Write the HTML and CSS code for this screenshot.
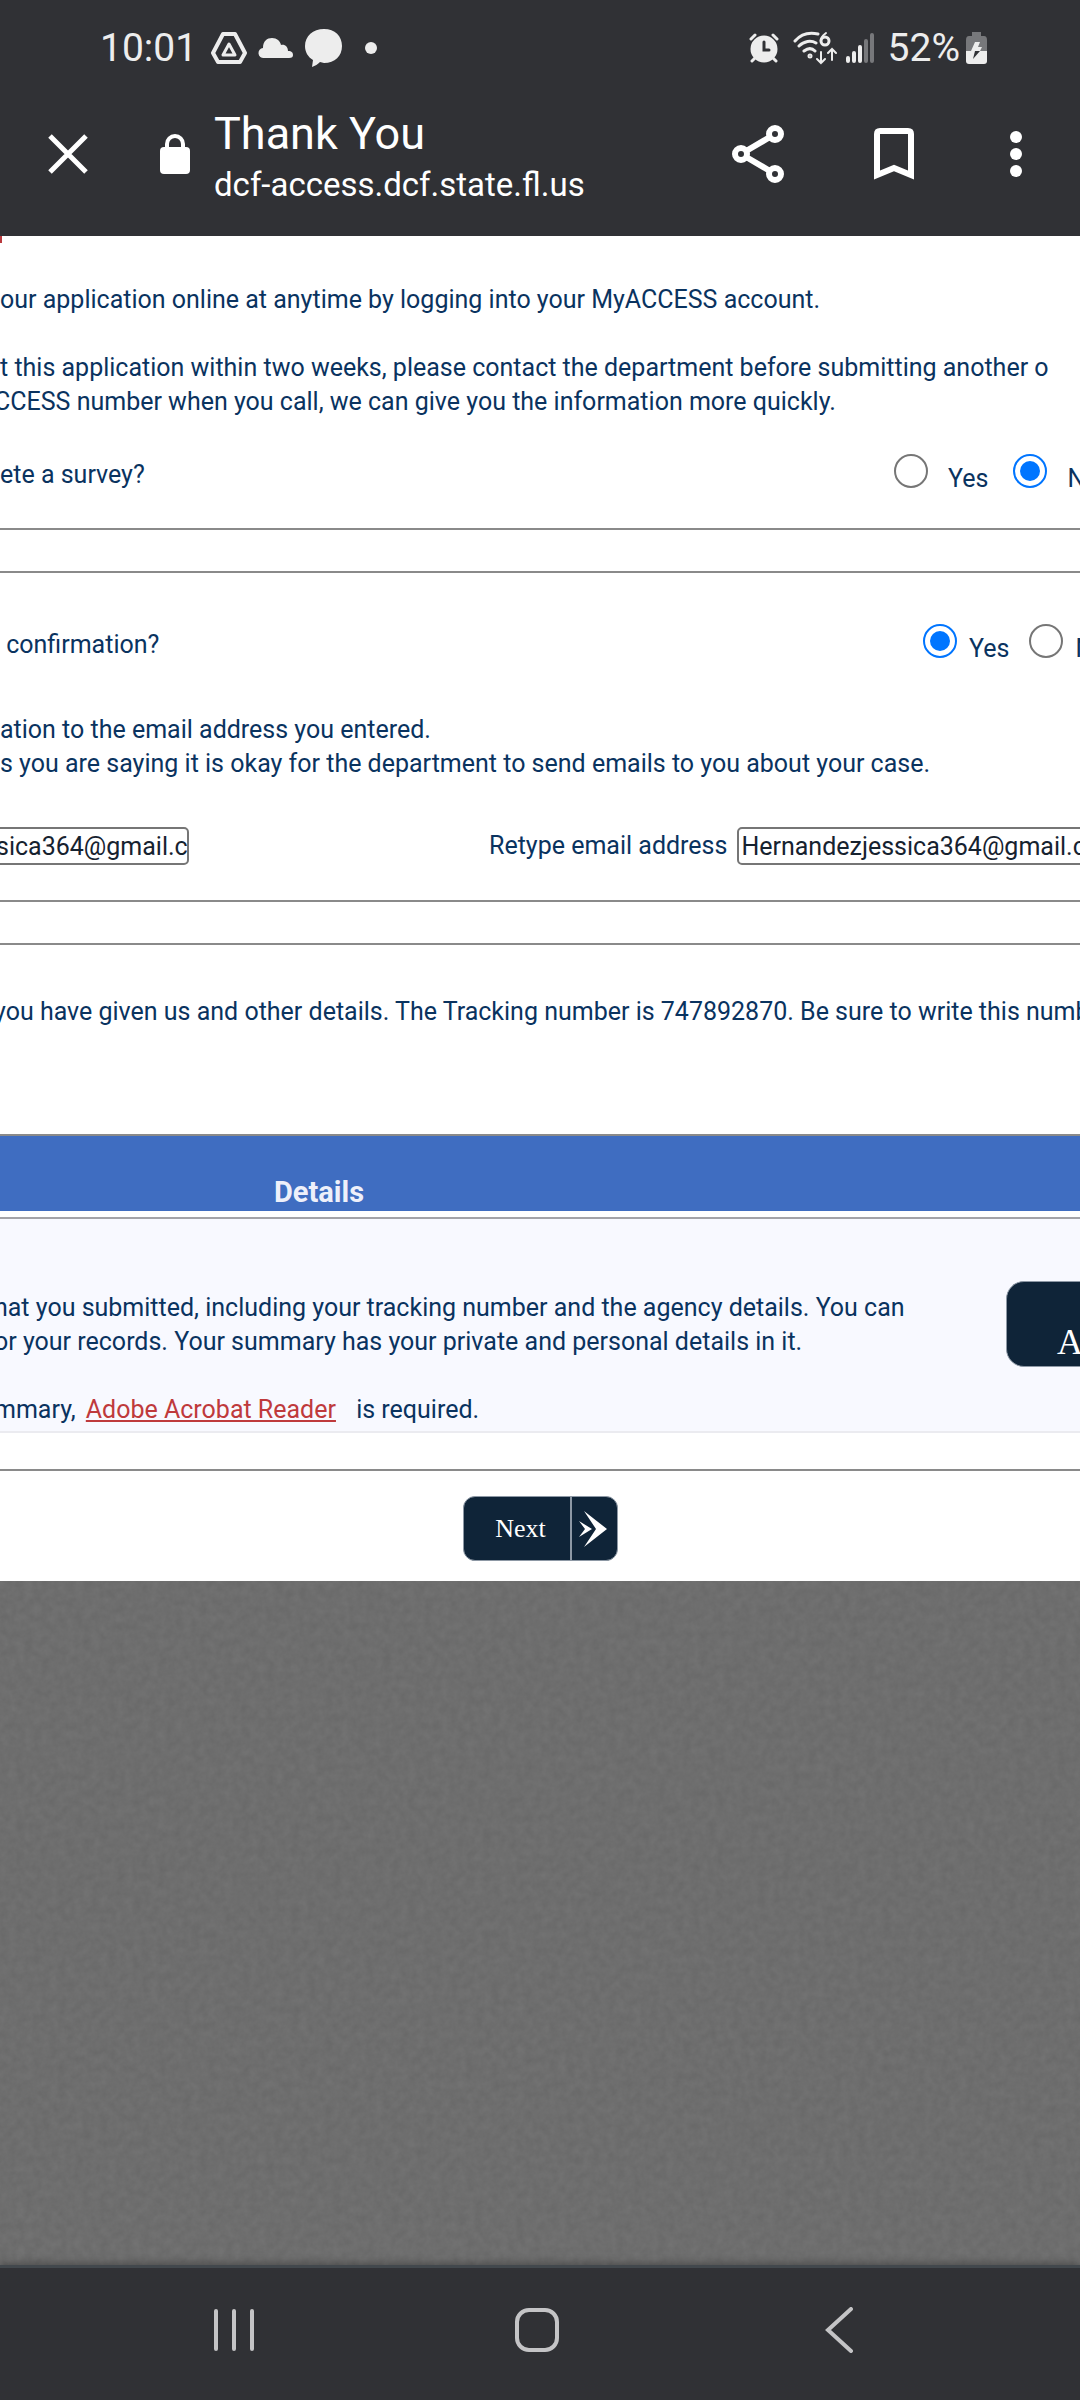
FILE: index.html
```html
<!DOCTYPE html>
<html lang="en">
<head>
    <meta charset="UTF-8">
    <meta name="viewport" content="width=device-width, initial-scale=1.0">
    <title>Thank You</title>
    <link rel="stylesheet" href="styles.css">
</head>
<body>
<!-- Phone status bar -->
<div class="status-bar">
    <span class="status-text">10:01</span>
    <svg class="icon-drive" width="36" height="32" viewBox="0 0 36 32" fill="none" stroke="#ededed" stroke-width="4" stroke-linejoin="round">
        <path d="M12 2h12l10 19-5 9H7l-5-9z"/>
        <path d="M18 12l6 11H12z" stroke-width="3"/>
    </svg>
    <svg class="icon-cloud" width="36" height="22" viewBox="0 0 36 22" fill="#ededed">
        <path d="M6 21a5 5 0 0 1-1-10C5 4 9 1 14 1c5 0 8 3 9 7 4-1 7 2 7 6 4 0 5 2 5 4s-1 3-4 3z"/>
    </svg>
    <svg class="icon-bubble" width="38" height="38" viewBox="0 0 38 38" fill="#ededed">
        <path d="M19 0c11 0 18 7 18 17s-7 17-18 17l-4-1c-2 2-5 4-8 5l1-7C3 28 0 23 0 17 0 7 8 0 19 0z"/>
    </svg>
    <span class="dot"></span>
    <div class="status-right">
        <svg width="30" height="30" viewBox="0 0 30 30" fill="#ededed" stroke="#ededed" stroke-width="3" stroke-linecap="round">
            <circle cx="15" cy="16" r="12"/>
            <path d="M2 6l4-4M28 6l-4-4M6 25l-3 3M24 25l3 3"/>
            <path d="M15 9v8h5" fill="none" stroke="#303135"/>
        </svg>
        <svg class="icon-wifi" width="44" height="34" viewBox="0 0 44 34" fill="none" stroke="#ededed" stroke-width="3" stroke-linecap="round">
            <path d="M2 10C8 3 16 1 25 3M6 15c5-5 12-6 17-3M11 20c4-3 8-3 11 0"/>
            <circle cx="17" cy="25" r="1"/>
            <path d="M33 2c-4 3-6 6-5 9" stroke-width="2"/>
            <circle cx="32" cy="10" r="4"/>
            <path d="M28 21v11m-4-4l4 4 4-4M39 29V18m-4 4l4-4 4 4" stroke-width="2"/>
        </svg>
        <svg class="icon-signal" width="28" height="30" viewBox="0 0 28 30" fill="none" stroke="#ededed" stroke-width="4" stroke-linecap="round">
            <path d="M2 25v3M8 20v8M14 14v14"/>
            <path d="M20 8v20M26 2v26" stroke="#77787b"/>
        </svg>
        <span class="status-text">52%</span>
        <svg class="icon-battery" width="22" height="32" viewBox="0 0 22 32">
            <path d="M6 0h9v4h3q3 0 3 4v11H0V8q0-4 3-4h3z" fill="#77787b"/>
            <path d="M0 19h21v10q0 3-3 3H3q-3 0-3-3z" fill="#ededed"/>
            <path d="M9 10h5l-2 5h4l-2 4H5z" fill="#ededed"/>
            <path d="M9 19h5l-7 8z" fill="#303135"/>
        </svg>
    </div>
</div>

<!-- Browser toolbar -->
<header class="toolbar">
    <button type="button" class="icon-button" aria-label="Close">
        <svg width="40" height="40" viewBox="0 0 40 40" stroke="#fff" stroke-width="5">
            <path d="M2 2l36 36M38 2L2 38"/>
        </svg>
    </button>
    <svg class="lock" width="30" height="40" viewBox="0 0 30 40">
        <path d="M7 16V10a8 8 0 0 1 16 0v6" fill="none" stroke="#fff" stroke-width="4"/>
        <rect y="13" width="30" height="27" rx="4" fill="#fff"/>
    </svg>
    <div class="site">
        <div class="site-title">Thank You</div>
        <div class="site-url">dcf-access.dcf.state.fl.us</div>
    </div>
    <div class="toolbar-actions">
        <button type="button" class="icon-button" aria-label="Share">
            <svg width="52" height="58" viewBox="0 0 52 58" fill="none" stroke="#fff" stroke-width="6">
                <path d="M9 29l34-20M9 29l34 20"/>
                <g fill="#303135">
                    <circle cx="9" cy="29" r="6"/>
                    <circle cx="43" cy="9" r="6"/>
                    <circle cx="43" cy="49" r="6"/>
                </g>
            </svg>
        </button>
        <button type="button" class="icon-button" aria-label="Bookmark">
            <svg width="40" height="52" viewBox="0 0 40 52" fill="none" stroke="#fff" stroke-width="6">
                <path d="M3 47V6q0-3 3-3h28q3 0 3 3v41l-17-7z"/>
            </svg>
        </button>
        <button type="button" class="icon-button" aria-label="More options">
            <svg width="24" height="46" viewBox="0 0 24 46" fill="#fff">
                <circle cx="12" cy="6" r="6"/>
                <circle cx="12" cy="23" r="6"/>
                <circle cx="12" cy="40" r="6"/>
            </svg>
        </button>
    </div>
</header>

<!-- Page content -->
<main class="content">
    <div class="required-mark"></div>
    <p>our application online at anytime by logging into your MyACCESS account.</p>
    <p>t this application within two weeks, please contact the department before submitting another o<br>
        <span class="cut">CCESS number when you call, we can give you the information more quickly.</span></p>

    <div class="question">
        <span>ete a survey?</span>
        <div class="choices survey">
            <input type="radio" name="survey" id="surveyYes">
            <label for="surveyYes">Yes</label>
            <input type="radio" name="survey" id="surveyNo" checked>
            <label for="surveyNo">No</label>
        </div>
    </div>

    <div class="divider"></div>

    <div class="question">
        <span>&nbsp;confirmation?</span>
        <div class="choices confirm">
            <input type="radio" name="confirm" id="confirmYes" checked>
            <label for="confirmYes">Yes</label>
            <input type="radio" name="confirm" id="confirmNo">
            <label for="confirmNo">No</label>
        </div>
    </div>

    <p class="consent">ation to the email address you entered.<br>
        s you are saying it is okay for the department to send emails to you about your case.</p>

    <div class="emails">
        <input type="text" class="email-first cut" value="sica364@gmail.c" aria-label="Email address">
        <label for="retypeEmail">Retype email address</label>
        <input type="text" class="email-retype" id="retypeEmail" value="Hernandezjessica364@gmail.com">
    </div>

    <div class="divider"></div>

    <p class="tracking"><span class="cut">you have given us and other details. The Tracking number is 747892870. Be sure to write this number</span></p>

    <table class="details">
        <thead>
        <tr><th colspan="2">Details</th></tr>
        </thead>
        <tbody>
        <tr>
            <td>
                <p><span class="cut">hat you submitted, including your tracking number and the agency details. You can</span><br>
                    <span class="cut">or your records. Your summary has your private and personal details in it.</span></p>
                <p><span class="cut">mmary,</span> <a href="#">Adobe Acrobat Reader</a> is required.</p>
            </td>
            <td class="action"><button type="button" class="navy summary-button">A</button></td>
        </tr>
        </tbody>
    </table>

    <div class="footer">
        <button type="button" class="navy next-button">
            <span class="next-text">Next</span>
            <svg width="28" height="36" viewBox="0 0 28 36" fill="#fff">
                <path d="M5 0l23 18L5 36l12-18z"/>
                <path d="M0 10l13 8-13 8 6-8z"/>
            </svg>
        </button>
    </div>
</main>

<!-- Textured backdrop under the page -->
<div class="backdrop">
    <svg width="100%" height="100%" aria-hidden="true">
        <filter id="grain" x="0" y="0" width="100%" height="100%" color-interpolation-filters="sRGB">
            <feTurbulence type="fractalNoise" baseFrequency="0.12" numOctaves="3" seed="4"/>
            <feColorMatrix values="0.05 0 0 0 0.405  0.05 0 0 0 0.405  0.05 0 0 0 0.405  0 0 0 0 1"/>
        </filter>
        <rect width="100%" height="100%" filter="url(#grain)"/>
    </svg>
</div>

<!-- Android navigation -->
<nav class="nav-bar">
    <button type="button" class="icon-button" aria-label="Recents">
        <svg width="46" height="46" viewBox="0 0 46 46" stroke="#c4c4c6" stroke-width="4" stroke-linecap="round">
            <path d="M5 4v38M23 4v38M41 4v38"/>
        </svg>
    </button>
    <button type="button" class="icon-button" aria-label="Home">
        <svg width="46" height="46" viewBox="0 0 46 46" fill="none" stroke="#c4c4c6" stroke-width="4">
            <rect x="3" y="3" width="40" height="40" rx="12"/>
        </svg>
    </button>
    <button type="button" class="icon-button" aria-label="Back">
        <svg width="46" height="46" viewBox="0 0 46 46" fill="none" stroke="#c4c4c6" stroke-width="4" stroke-linecap="round">
            <path d="M35 2L12 23l23 21"/>
        </svg>
    </button>
</nav>
</body>
</html>
```
FILE: styles.css
```css
/* General Reset */
* {
    box-sizing: border-box;
}

body {
    margin: 0;
    min-height: 100vh;
    display: flex;
    flex-direction: column;
    font-family: Roboto, "Liberation Sans", sans-serif;
    background-color: #303135;
    overflow-x: hidden;
}

button {
    padding: 0;
    border: none;
    background: none;
    cursor: pointer;
}

svg {
    display: block;
    flex-shrink: 0;
}

/* Status bar */
.status-bar {
    display: flex;
    align-items: center;
    height: 96px;
    padding: 0 92px 0 100px;
    color: #ededed;
}

.status-text {
    font-size: 39px;
}

.icon-drive {
    margin-left: 14px;
}

.icon-cloud,
.icon-bubble {
    margin-left: 11px;
}

.dot {
    width: 12px;
    height: 12px;
    margin-left: 22px;
    border-radius: 50%;
    background-color: #ededed;
}

.status-right {
    display: flex;
    align-items: center;
    margin-left: auto;
}

.icon-wifi {
    margin-left: 14px;
}

.icon-signal {
    margin: 0 14px 0 9px;
}

.icon-battery {
    margin-left: 6px;
}

/* Toolbar */
.toolbar {
    display: flex;
    align-items: center;
    height: 140px;
    padding: 0 52px 24px 48px;
    color: #ffffff;
}

.lock {
    margin: 0 24px 0 72px;
}

.site {
    padding-top: 7px;
}

.site-title {
    font-size: 45px;
    line-height: 54px;
}

.site-url {
    font-size: 33px;
    line-height: 48px;
}

.toolbar-actions {
    display: flex;
    align-items: center;
    gap: 90px;
    margin-left: auto;
}

/* Page content */
.content {
    background-color: #ffffff;
    color: #0a335f;
    font-size: 25px;
    line-height: 34px;
    white-space: nowrap;
    overflow: hidden;
}

.content p {
    margin: 0 0 34px;
}

.required-mark {
    width: 2px;
    height: 7px;
    margin-bottom: 40px;
    background-color: #b93a3e;
}

/* First letter runs off the left edge */
.cut {
    margin-left: -6px;
}

.question {
    display: flex;
    align-items: center;
    justify-content: space-between;
    height: 44px;
}

.choices {
    display: flex;
    align-items: center;
}

.choices input {
    appearance: none;
    flex-shrink: 0;
    width: 34px;
    height: 34px;
    margin: 0 0 8px;
    border: 2px solid #767676;
    border-radius: 50%;
    background-color: #ffffff;
}

.choices input:checked {
    padding: 5px;
    border-color: #0075ff;
    background: #0075ff content-box;
}

.choices label {
    padding-top: 8px;
}

.survey {
    width: 186px;
}

.survey label {
    margin: 0 25px 0 20px;
}

.confirm {
    width: 157px;
}

.confirm label {
    margin: 0 20px 0 12px;
}

.divider {
    height: 45px;
    margin: 31px 0 50px;
    border: solid #8a8a8a;
    border-width: 2px 0;
}

.content .consent {
    margin: 46px 0;
}

/* Email fields */
.emails {
    display: flex;
    align-items: center;
    margin-bottom: 35px;
}

.emails input {
    flex-shrink: 0;
    height: 38px;
    border: 2px solid #767676;
    border-radius: 5px;
    font: inherit;
    color: #16222f;
}

.emails label {
    margin: 0 10px 0 300px;
}

.email-first {
    width: 195px;
    padding: 0;
}

.email-retype {
    width: 380px;
    padding: 0 2px;
}

.content .tracking {
    margin-bottom: 105px;
}

/* Details table */
.details {
    width: 100%;
    margin-bottom: 36px;
    border-spacing: 0;
    table-layout: fixed;
}

.details th {
    height: 83px;
    padding: 0 0 2px 274px;
    border-top: 2px solid #8a8a8a;
    border-bottom: 6px solid #ffffff;
    background-color: #3f6dc1;
    color: #eef0fa;
    font-size: 29px;
    text-align: left;
    vertical-align: bottom;
}

.details td {
    padding: 72px 0 4px;
    border-top: 2px solid #a3a3a8;
    border-bottom: 2px solid #ebebf0;
    background-color: #f8f9ff;
    vertical-align: top;
}

.details td p:last-child {
    margin: 0;
}

.details .action {
    padding: 62px 0 0 466px;
}

.details a {
    margin: 0 14px 0 4px;
    color: #bf3a3c;
}

/* Buttons */
.navy {
    border: 1px solid #8d98a5;
    background-color: #0f2438;
    color: #ffffff;
    font-family: "Liberation Serif", serif;
}

.summary-button {
    width: 160px;
    height: 86px;
    padding: 36px 0 0 50px;
    border-radius: 18px;
    font-size: 36px;
    text-align: left;
}

.footer {
    padding: 25px 0 20px;
    border-top: 2px solid #8a8a8a;
}

.next-button {
    display: flex;
    align-items: center;
    width: 155px;
    height: 65px;
    margin: 0 auto;
    border-radius: 12px;
    font-size: 26px;
}

.next-text {
    width: 108px;
    margin-right: 7px;
    padding-left: 8px;
    border-right: 2px solid #8d98a5;
    line-height: 63px;
    text-align: center;
}

/* Backdrop */
.backdrop {
    position: relative;
    flex: 1;
    background-color: #6c6c6c;
}

.backdrop svg {
    position: absolute;
}

/* Navigation */
.nav-bar {
    position: relative;
    display: flex;
    justify-content: space-between;
    align-items: center;
    height: 135px;
    padding: 0 218px 8px 211px;
    border-top: 3px solid #42484d;
    background-color: #303135;
    box-shadow: 0 -2px 8px rgba(0, 0, 0, 0.3);
}
```
